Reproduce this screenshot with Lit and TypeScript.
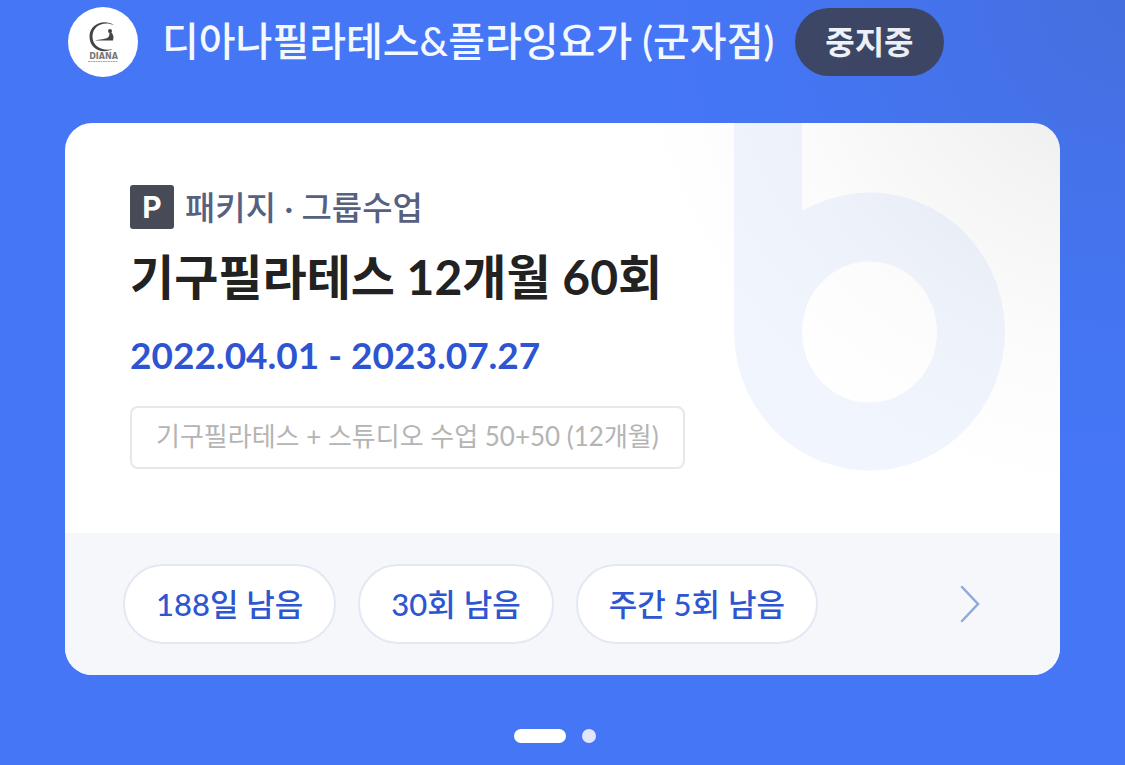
import { LitElement, html, css } from "lit";
import { customElement, property, state } from "lit/decorators.js";
import { classMap } from "lit/directives/class-map.js";

interface Pass {
  kind: string;
  title: string;
  period: string;
  option: string;
  remaining: string[];
}

@customElement("studio-header")
class StudioHeader extends LitElement {
  @property() name = "";
  @property() status = "";

  static styles = css`
    :host {
      display: flex;
      align-items: center;
      padding: 0 68px;
      color: #f4f8ff;
    }
    .logo {
      flex: none;
      width: 70px;
      height: 70px;
      border-radius: 50%;
      background: #fff;
    }
    .name {
      margin: 0 21px 0 24px;
      padding-bottom: 2px;
      font-size: 40px;
      line-height: 66px;
      font-weight: 500;
      white-space: nowrap;
    }
    .status {
      flex: none;
      padding: 0 30px;
      border-radius: 34px;
      background: #3c4666;
      font-size: 32px;
      line-height: 68px;
      font-weight: 700;
      white-space: nowrap;
    }
  `;

  render() {
    return html`
      <svg class="logo" viewBox="0 0 70 70" role="img" aria-label="DIANA">
        <path
          d="M46 18C36 11.500 21.500 17 21.500 29.500C21.500 42 34 47.500 45 42C35 44.500 24.500 40 24.500 29.500C24.500 19 35 13.500 46 18Z"
          fill="#444"
        />
        <path d="M27 33.500C32 32 37 32.500 40 30.500C42 28.500 41.500 26 41 24C44.500 25.500 46.500 29 45 33.500Z" fill="#444" />
        <circle cx="42" cy="24" r="2" fill="#444" />
        <text
          x="35.500"
          y="52"
          text-anchor="middle"
          font-family="DejaVu Sans, sans-serif"
          font-size="8"
          font-weight="700"
          fill="#777"
        >
          DIANA
        </text>
        <path d="M20 54.500H50" stroke="#aaa" stroke-width="1" stroke-dasharray="2 .5" />
      </svg>
      <h1 class="name">${this.name}</h1>
      <span class="status">${this.status}</span>
    `;
  }
}

@customElement("pass-card")
class PassCard extends LitElement {
  @property({ attribute: false }) pass!: Pass;

  static styles = css`
    :host {
      display: block;
    }
    .card {
      position: relative;
      overflow: hidden;
      border-radius: 27px;
      background: #fff;
    }
    .mark {
      position: absolute;
      top: 0;
      right: 55px;
      width: 271px;
      height: 348px;
      fill: #f0f5fe;
    }
    .body {
      position: relative;
      display: flex;
      flex-direction: column;
      align-items: flex-start;
      padding: 60px 65px 64px;
    }
    .kind {
      display: flex;
      align-items: center;
      gap: 11px;
      margin: 0;
      color: #56607f;
      font-size: 33px;
      line-height: 48px;
      font-weight: 500;
    }
    .letter {
      width: 44px;
      border-radius: 3px;
      background: #474a57;
      color: #fff;
      font-family: Inter, sans-serif;
      font-size: 30px;
      line-height: 44px;
      font-weight: 700;
      text-align: center;
    }
    .title {
      margin: 10px 0 0;
      color: #222;
      font-size: 48px;
      line-height: 72px;
      font-weight: 700;
    }
    .period {
      margin: 18px 0 0;
      color: #2d54d3;
      font-size: 37px;
      line-height: 48px;
      font-weight: 700;
    }
    .option {
      margin: 27px 0 0;
      padding: 0 24px 2px;
      border: 2px solid #e8e8e8;
      border-radius: 8px;
      color: #b4b4b4;
      font-size: 26px;
      line-height: 57px;
      font-weight: 400;
    }
    .foot {
      display: flex;
      align-items: center;
      justify-content: space-between;
      padding: 31px 72px 31px 58px;
      background: #f5f7fb;
    }
    .pills {
      display: flex;
      gap: 22px;
      margin: 0;
      padding: 0;
      list-style: none;
    }
    .pill {
      padding: 0 31px;
      border: 2px solid #e4e8f3;
      border-radius: 40px;
      background: #fff;
      color: #2d56d0;
      font-size: 31px;
      line-height: 76px;
      font-weight: 500;
      white-space: nowrap;
    }
    .more {
      display: flex;
      padding: 8px;
      border: 0;
      background: none;
      cursor: pointer;
    }
    .more svg {
      width: 20px;
      height: 38px;
      fill: none;
      stroke: #8fa9dc;
      stroke-width: 2.500;
      stroke-linecap: round;
    }
  `;

  render() {
    const { kind, title, period, option, remaining } = this.pass;
    return html`
      <article class="card">
        <svg class="mark" viewBox="0 0 271 348" aria-hidden="true">
          <path
            fill-rule="evenodd"
            d="M0 0H68V88A135.500 139 0 1 1 0 209ZM135.500 138.500A67.500 70.500 0 1 0 135.500 279.500A67.500 70.500 0 1 0 135.500 138.500Z"
          />
        </svg>
        <div class="body">
          <p class="kind"><span class="letter">P</span>${kind}</p>
          <h2 class="title">${title}</h2>
          <p class="period">${period}</p>
          <p class="option">${option}</p>
        </div>
        <div class="foot">
          <ul class="pills">
            ${remaining.map((text) => html`<li class="pill">${text}</li>`)}
          </ul>
          <button class="more" type="button" aria-label="상세 보기">
            <svg viewBox="0 0 20 38"><path d="M2 2L18 19L2 36" /></svg>
          </button>
        </div>
      </article>
    `;
  }
}

@customElement("app-root")
class AppRoot extends LitElement {
  @state() private page = 0;

  private pass: Pass = {
    kind: "패키지 · 그룹수업",
    title: "기구필라테스 12개월 60회",
    period: "2022.04.01 - 2023.07.27",
    option: "기구필라테스 + 스튜디오 수업 50+50 (12개월)",
    remaining: ["188일 남음", "30회 남음", "주간 5회 남음"],
  };

  static styles = css`
    :host {
      display: block;
      position: relative;
      box-sizing: border-box;
      min-height: 100vh;
      padding: 7px 0 22px;
      overflow: hidden;
      background: #4576f6;
      font-family: Lato, "Noto Sans CJK KR", sans-serif;
    }
    .card {
      margin: 46px 65px 54px;
    }
    .shade {
      position: absolute;
      inset: 0;
      pointer-events: none;
      background: radial-gradient(
        500px 500px at 100% 0,
        rgba(60, 60, 60, 0.12),
        rgba(60, 60, 60, 0.06) 40%,
        rgba(60, 60, 60, 0.02) 70%,
        rgba(60, 60, 60, 0)
      );
    }
    .dots {
      display: flex;
      justify-content: center;
    }
    .dot {
      width: 14px;
      height: 14px;
      margin: 0 16px 0 0;
      padding: 0;
      border: 0;
      border-radius: 7px;
      background: #e3e6fb;
      cursor: pointer;
    }
    .dot.on {
      width: 52px;
      background: #fff;
    }
  `;

  render() {
    return html`
      <studio-header name="디아나필라테스&플라잉요가 (군자점)" status="중지중"></studio-header>
      <pass-card class="card" .pass=${this.pass}></pass-card>
      <nav class="dots">
        ${[0, 1].map(
          (i) => html`<button
            type="button"
            class=${classMap({ dot: true, on: i === this.page })}
            aria-label=${`${i + 1}번째 수강권`}
            @click=${() => (this.page = i)}
          ></button>`
        )}
      </nav>
      <div class="shade"></div>
    `;
  }
}
